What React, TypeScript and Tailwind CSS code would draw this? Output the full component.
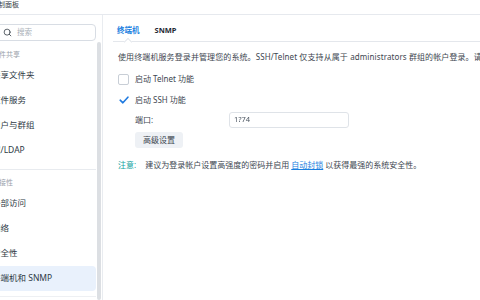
import { Search } from "lucide-react";

const groupA = ["共享文件夹", "文件服务", "用户与群组", "域/LDAP"];
const groupB = ["外部访问", "网络", "安全性", "终端机和 SNMP"];

function NavItem({ label, active }: { label: string; active?: boolean }) {
  return (
    <div
      className={`h-[25px] flex items-center rounded-[4px] text-[8.5px] leading-none text-[#2f3a45] ${
        active ? "bg-[#e9f1fc]" : ""
      }`}
    >
      {label}
    </div>
  );
}

function Sidebar() {
  return (
    <aside className="w-[103px] shrink-0 flex border-r border-[#e9ecf0]">
      <nav className="w-[104px] -ml-[8px] shrink-0 flex flex-col">
        <div className="mt-[9px] h-[17px] flex items-center gap-[5px] pl-[10px] border border-[#d8dde4] rounded-[4px]">
          <Search size={9} strokeWidth={2.2} className="text-[#3c444d]" />
          <span className="text-[7.5px] leading-none text-[#a9b0b8]">搜索</span>
        </div>
        <div className="mt-[4px] h-[18px] flex items-center text-[7px] leading-none text-[#9aa2ab]">文件共享</div>
        {groupA.map((l) => (
          <NavItem key={l} label={l} />
        ))}
        <div className="mt-[6px] h-px bg-[#e8ebef]" />
        <div className="mt-[3px] h-[18px] flex items-center text-[7px] leading-none text-[#9aa2ab]">连接性</div>
        {groupB.map((l, i) => (
          <NavItem key={l} label={l} active={i === groupB.length - 1} />
        ))}
        <div className="mt-[5px] h-px bg-[#eef0f3]" />
      </nav>
      <div className="ml-[1px] mt-[27px] w-[4px] rounded-[2px] bg-[#dcdfe3]" />
    </aside>
  );
}

function Checkbox({ checked }: { checked?: boolean }) {
  return (
    <span
      className={`w-[11px] h-[11px] rounded-[2px] flex items-center justify-center ${
        checked ? "" : "border border-[#c8ced6] bg-white"
      }`}
    >
      {checked ? (
        <svg width="10" height="10" viewBox="0 0 10 10">
          <path d="M1.2 5.2 L3.9 7.8 L8.9 2.2" fill="none" stroke="#1f7ae0" strokeWidth="1.6" strokeLinecap="round" strokeLinejoin="round" />
        </svg>
      ) : null}
    </span>
  );
}

export default function App() {
  return (
    <div className="w-[480px] h-[300px] overflow-hidden bg-white flex flex-col font-['Noto_Sans','Noto_Sans_CJK_SC',sans-serif]">
      <div className="h-[15px] shrink-0 border-b border-[#e6e9ee] flex items-start">
        <span className="-ml-[9px] text-[7px] leading-[9px] text-[#333b44]">控制面板</span>
      </div>
      <div className="flex flex-1 min-h-0">
        <Sidebar />
        <main className="flex-1 min-w-0 pl-[10px] flex flex-col">
          <div className="h-[27px] pt-[5px] flex items-center border-b border-[#e4e7ec] gap-[15px] pl-[4px]">
            <div className="relative h-full flex items-center">
              <span className="text-[7.5px] leading-none font-bold text-[#1a7fe0]">终端机</span>
              <span className="absolute left-1/2 -translate-x-1/2 bottom-[-4px] w-[6px] h-[6px] rotate-45 bg-white border-l border-t border-[#e4e7ec]" />
            </div>
            <span className="text-[7.5px] leading-none font-bold text-[#1f2933]">SNMP</span>
          </div>
          <div className="pl-[5px] flex flex-col text-[8px] text-[#3d4650]">
            <p className="mt-[9px] h-[12px] leading-[12px] whitespace-nowrap tracking-[0.1px]">
              使用终端机服务登录并管理您的系统。SSH/Telnet 仅支持从属于 administrators 群组的帐户登录。请使用
            </p>
            <div className="mt-[10px] h-[12px] flex items-center gap-[6px]">
              <Checkbox />
              <span className="leading-none">启动 Telnet 功能</span>
            </div>
            <div className="mt-[9px] h-[12px] flex items-center gap-[6px]">
              <Checkbox checked />
              <span className="leading-none">启动 SSH 功能</span>
            </div>
            <div className="mt-[6px] pl-[17px] flex items-center">
              <span className="w-[94px] leading-none">端口:</span>
              <div className="w-[120px] h-[16px] border border-[#dfe3e8] rounded-[3px] flex items-center pl-[4px]">
                <span className="text-[7.5px] leading-none text-[#4b5560] blur-[0.5px]">1?74</span>
              </div>
            </div>
            <div className="mt-[4px] pl-[17px] flex">
              <div className="w-[48px] h-[16px] rounded-[3px] bg-[#eef1f5] flex items-center justify-center leading-none">
                高级设置
              </div>
            </div>
            <p className="mt-[11px] h-[12px] leading-[12px] whitespace-nowrap">
              <span className="text-[#11a3a0]">注意:</span>
              <span className="ml-[9px]">建议为登录帐户设置高强度的密码并启用 </span>
              <span className="text-[#1a7fe0] underline underline-offset-[1px]">自动封锁</span>
              <span> 以获得最强的系统安全性。</span>
            </p>
          </div>
        </main>
      </div>
    </div>
  );
}
